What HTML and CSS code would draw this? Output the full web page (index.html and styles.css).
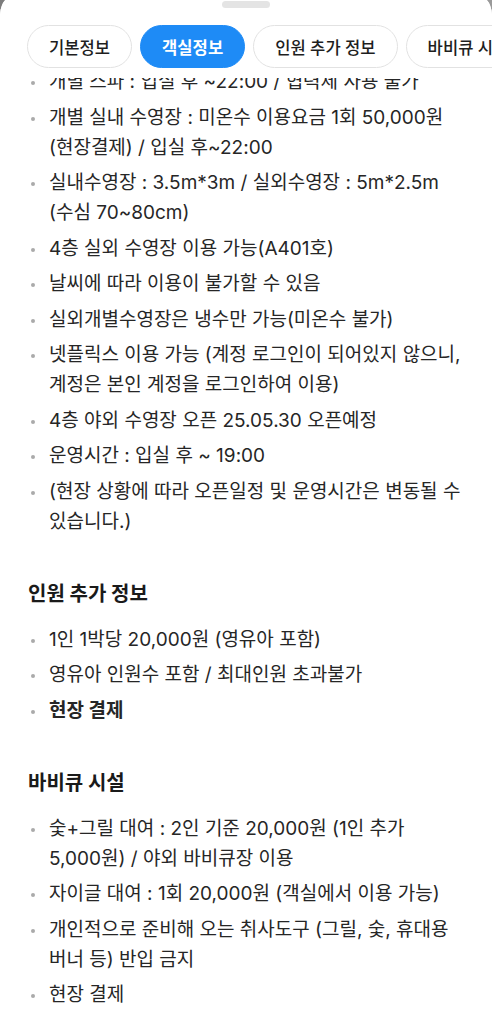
FILE: index.html
```html
<!DOCTYPE html>
<html lang="ko">
<head>
<meta charset="utf-8">
<title>객실정보</title>
<link rel="stylesheet" href="styles.css">
</head>
<body>
<div class="sheet">
  <header class="header">
    <div class="handle"></div>
    <nav class="tabs">
      <span class="tab">기본정보</span>
      <span class="tab active">객실정보</span>
      <span class="tab">인원 추가 정보</span>
      <span class="tab">바비큐 시설</span>
    </nav>
  </header>
  <main class="content">
    <section class="section first">
      <ul class="list">
        <li>개별 스파 : 입실 후 ~22:00 / 협력체 사용 불가</li>
        <li>개별 실내 수영장 : 미온수 이용요금 1회 50,000원 (현장결제) / 입실 후~22:00</li>
        <li>실내수영장 : 3.5m*3m / 실외수영장 : 5m*2.5m (수심 70~80cm)</li>
        <li>4층 실외 수영장 이용 가능(A401호)</li>
        <li>날씨에 따라 이용이 불가할 수 있음</li>
        <li>실외개별수영장은 냉수만 가능(미온수 불가)</li>
        <li>넷플릭스 이용 가능 (계정 로그인이 되어있지 않으니, 계정은 본인 계정을 로그인하여 이용)</li>
        <li>4층 야외 수영장 오픈 25.05.30 오픈예정</li>
        <li>운영시간 : 입실 후 ~ 19:00</li>
        <li>(현장 상황에 따라 오픈일정 및 운영시간은 변동될 수 있습니다.)</li>
      </ul>
    </section>
    <section class="section">
      <h2 class="title">인원 추가 정보</h2>
      <ul class="list">
        <li>1인 1박당 20,000원 (영유아 포함)</li>
        <li>영유아 인원수 포함 / 최대인원 초과불가</li>
        <li><strong>현장 결제</strong></li>
      </ul>
    </section>
    <section class="section">
      <h2 class="title">바비큐 시설</h2>
      <ul class="list">
        <li>숯+그릴 대여 : 2인 기준 20,000원 (1인 추가 5,000원) / 야외 바비큐장 이용</li>
        <li>자이글 대여 : 1회 20,000원 (객실에서 이용 가능)</li>
        <li>개인적으로 준비해 오는 취사도구 (그릴, 숯, 휴대용 버너 등) 반입 금지</li>
        <li>현장 결제</li>
      </ul>
    </section>
  </main>
</div>
</body>
</html>
```

FILE: styles.css
```css
html, body {
  margin: 0;
  padding: 0;
}
body {
  background: linear-gradient(90deg, #7d7d7d, #9a9a9a);
  font-family: "Inter", "Noto Sans CJK KR", sans-serif;
  color: #222;
  height: 1024px;
  overflow: hidden;
}
.sheet {
  background: #fff;
  margin-top: -10px;
  border-radius: 25px 25px 0 0;
  height: 1034px;
  overflow: hidden;
}
.header {
  background: #fff;
  padding-bottom: 10px;
}
.handle {
  width: 48px;
  height: 7px;
  border-radius: 4px;
  background: #e4e4e4;
  margin: 11px auto 0;
}
.tabs {
  display: flex;
  gap: 8px;
  padding-left: 27px;
  margin-top: 17px;
  white-space: nowrap;
  overflow: hidden;
}
.tab {
  flex: none;
  box-sizing: border-box;
  height: 43px;
  padding: 0 21px;
  border: 1px solid #e2e2e2;
  border-radius: 22px;
  display: flex;
  align-items: center;
  font-size: 16.6px;
  font-weight: 500;
  color: #1e1e1e;
  background: #fff;
}
.tab.active {
  background: #1e8bf6;
  border-color: #1e8bf6;
  color: #fff;
  font-weight: 700;
}
.content {
  overflow: hidden;
  padding: 0 24px 0 28px;
}
.section {
  padding-top: 43px;
}
.section.first {
  padding-top: 0;
  margin-top: -11px;
}
.title {
  margin: 0 0 17px;
  font-size: 20px;
  line-height: 28px;
  font-weight: 700;
  color: #1a1a1a;
}
.list {
  list-style: none;
  margin: 0;
  padding: 0;
  display: flex;
  flex-direction: column;
  gap: 5.5px;
}
.list li {
  display: flex;
  font-size: 19px;
  line-height: 30px;
  color: #262626;
  word-break: keep-all;
}
.list li::before {
  content: "";
  flex: none;
  width: 4px;
  height: 4px;
  border-radius: 50%;
  background: #aaaaaa;
  margin: 14px 14px 0 3px;
}
.list strong {
  font-weight: 700;
}
```
